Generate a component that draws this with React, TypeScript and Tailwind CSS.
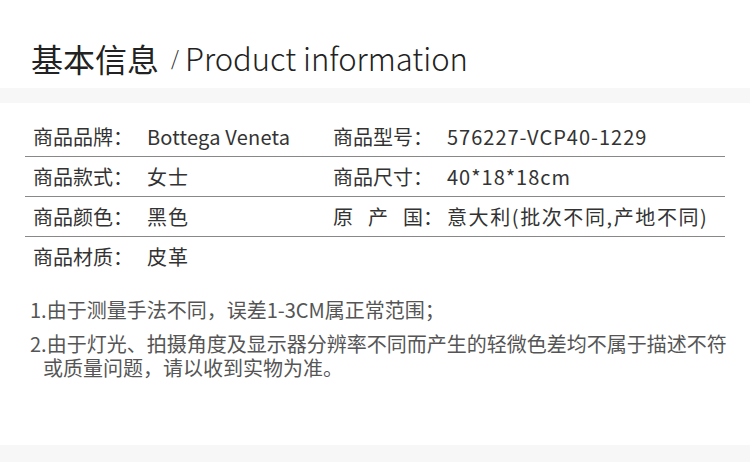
import React from "react";

const font = { fontFamily: '"Noto Sans CJK SC", "Noto Sans", sans-serif' };

function Cell({
  label,
  value,
  track = "tracking-[1px]",
}: {
  label: React.ReactNode;
  value: string;
  track?: string;
}) {
  return (
    <div className="flex items-center h-[39px] pl-2">
      <div className="w-[114px] shrink-0 whitespace-nowrap">{label}</div>
      <div className={"whitespace-nowrap " + track}>{value}</div>
    </div>
  );
}

export default function App() {
  return (
    <div
      className="w-[750px] h-[462px] bg-white flex flex-col text-[#333] overflow-hidden"
      style={font}
    >
      <div className="h-[88px] flex items-end pl-[31px] pb-[10px]">
        <span className="text-[32px] leading-[40px] text-[#222]">基本信息</span>
        <span className="text-[20px] leading-[40px] text-[#222] ml-[12px] mr-[6px] font-light">/</span>
        <span className="text-[31px] leading-[40px] text-[#222] font-light">Product information</span>
      </div>
      <div className="h-[15px] bg-[#f7f7f7]" />
      <div className="mx-[25px] mt-[14px] text-[20px] leading-[28px]">
        <div className="grid grid-cols-[300px_1fr] border-b border-[#888]">
          <Cell label="商品品牌：" value="Bottega Veneta" track="tracking-[0.2px]" />
          <Cell label="商品型号：" value="576227-VCP40-1229" />
        </div>
        <div className="grid grid-cols-[300px_1fr] border-b border-[#888]">
          <Cell label="商品款式：" value="女士" />
          <Cell label="商品尺寸：" value="40*18*18cm" />
        </div>
        <div className="grid grid-cols-[300px_1fr] border-b border-[#888]">
          <Cell label="商品颜色：" value="黑色" />
          <Cell
            label={
              <span>
                <span className="mr-[15px]">原</span>
                <span className="mr-[15px]">产</span>
                <span>国：</span>
              </span>
            }
            value="意大利(批次不同,产地不同)"
            track="tracking-[1.6px]"
          />
        </div>
        <div className="grid grid-cols-[300px_1fr]">
          <Cell label="商品材质：" value="皮革" />
        </div>
      </div>
      <div className="pl-[30px] mt-[22px] text-[20px] leading-[24px] text-[#555]">
        <div className="whitespace-nowrap">1.由于测量手法不同，误差1-3CM属正常范围；</div>
        <div className="mt-[10px] whitespace-nowrap pl-[13px] indent-[-13px]">
          2.由于灯光、拍摄角度及显示器分辨率不同而产生的轻微色差均不属于描述不符
          <br />
          或质量问题，请以收到实物为准。
        </div>
      </div>
      <div className="flex-1" />
      <div className="h-[17px] bg-[#f7f7f7]" />
    </div>
  );
}
